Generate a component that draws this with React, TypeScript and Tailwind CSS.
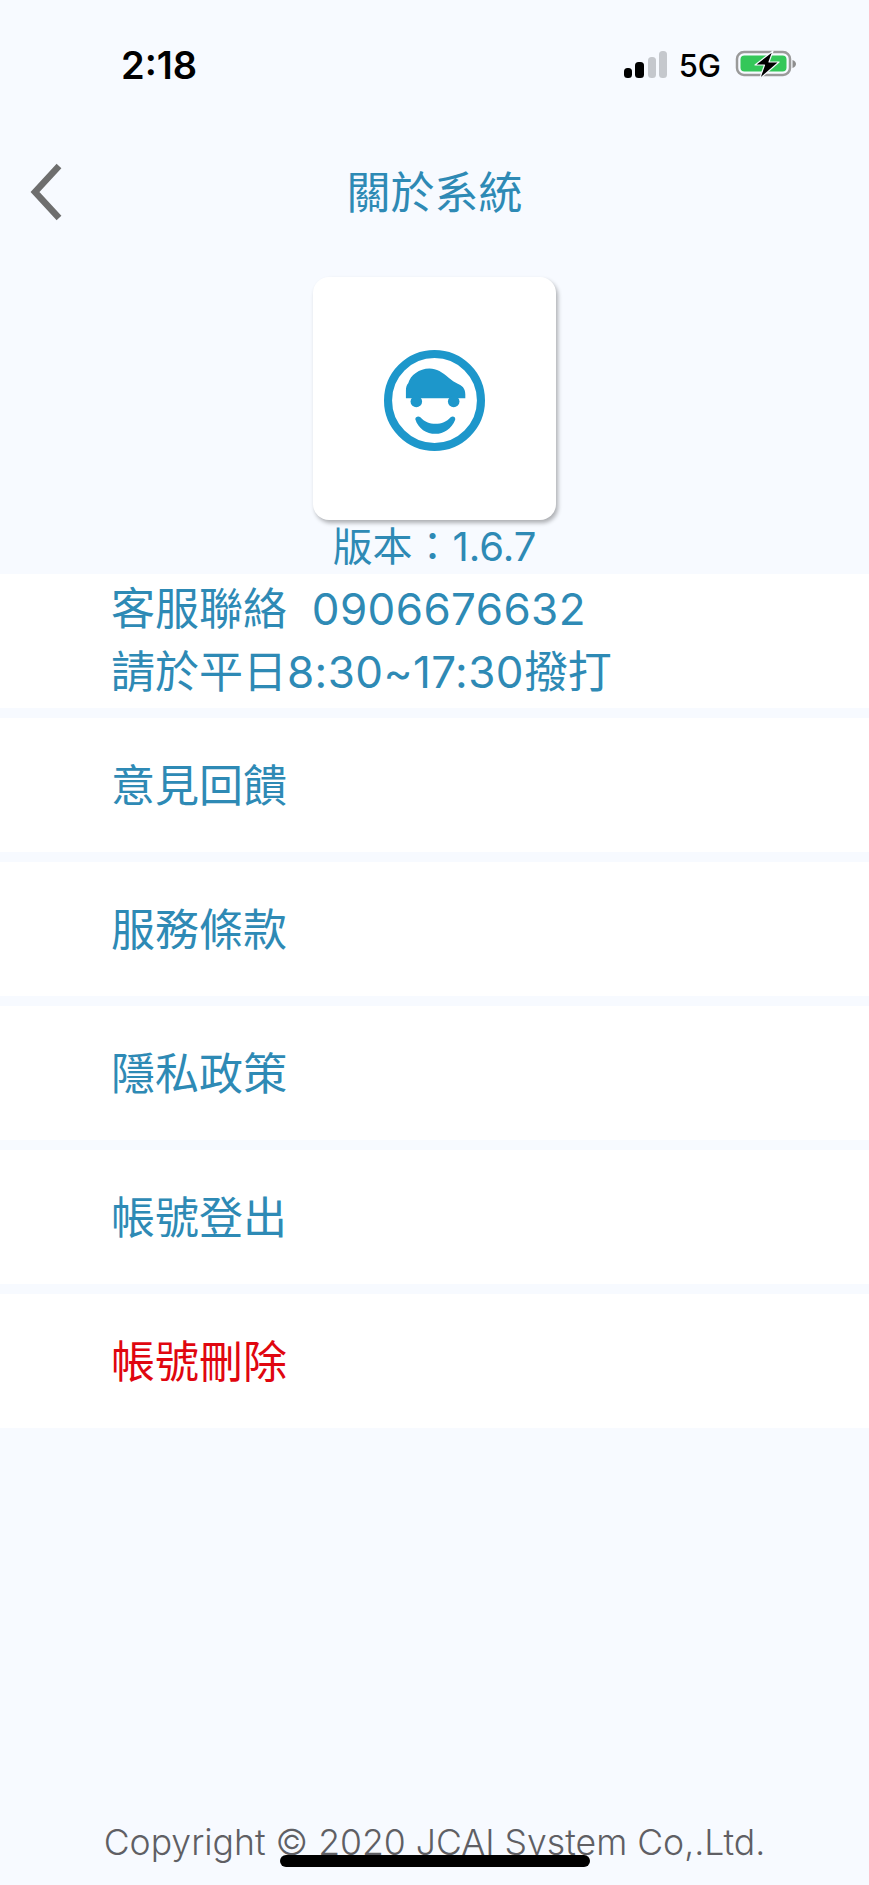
const FONT = "font-['Inter','Noto_Sans_CJK_TC',sans-serif]";

const menuItems = [
  { label: "意見回饋", danger: false },
  { label: "服務條款", danger: false },
  { label: "隱私政策", danger: false },
  { label: "帳號登出", danger: false },
  { label: "帳號刪除", danger: true },
];

function SignalIcon() {
  return (
    <svg width="44" height="28" viewBox="0 0 44 28">
      <rect x="0" y="17" width="8" height="10" rx="3.5" fill="#000" />
      <rect x="11" y="11" width="9" height="16" rx="3.5" fill="#000" />
      <rect x="24" y="6" width="8" height="21" rx="3.5" fill="#c5c8cd" />
      <rect x="35" y="0" width="8" height="27" rx="3.5" fill="#c5c8cd" />
    </svg>
  );
}

function BatteryIcon() {
  return (
    <svg width="62" height="30" viewBox="0 0 62 30">
      <rect x="2" y="2" width="53" height="23" rx="7" fill="none" stroke="#9a9a9a" strokeWidth="2.5" />
      <rect x="5.500" y="5.500" width="46" height="16" rx="4" fill="#34c759" />
      <path d="M57.500 10c2.500 1 3.500 2.500 3.500 4s-1 3-3.500 4z" fill="#8e8e8e" />
      <path d="M38 1 L20 15 H29.500 L24.500 29 L44 12 H34 Z" fill="#000" stroke="#f7faff" strokeWidth="1.200" strokeLinejoin="round" />
    </svg>
  );
}

function Logo() {
  return (
    <svg width="101" height="101" viewBox="0 0 100 100" fill="#1d97cb">
      <circle cx="50" cy="50" r="46" fill="none" stroke="#1d97cb" strokeWidth="8" />
      <path d="M21.700 47.700 V40 C21.700 37 22.500 34.500 24 33 C26 25 35 18.300 45 18.300 C52 18.300 58 22 64 27.500 C67 30 70 32 73 33.500 C77 35 80.500 38 80.500 44 V47.700 Z" />
      <circle cx="32" cy="51" r="5.700" />
      <circle cx="69" cy="51" r="5.700" />
      <path d="M31 68.500 C31 66 34 65 36 66.500 C40 71 45 73 51 73 C57 73 62 71 66 66.500 C68 65 71 66 70.500 69 C67 78 59 83 51 83 C42 83 34 78 31 68.500 Z" />
    </svg>
  );
}

export default function App() {
  return (
    <div className={`relative flex h-[1885px] w-full flex-col overflow-hidden bg-[#f7faff] ${FONT}`}>
      {/* status bar */}
      <div className="flex h-[130px] items-center justify-between pl-[121px] pr-[72px]">
        <span className="text-[38px] font-semibold leading-none text-black">2:18</span>
        <div className="flex items-center">
          <SignalIcon />
          <span className="ml-[11px] text-[31px] font-medium leading-none text-black">5G</span>
          <div className="ml-[14px]">
            <BatteryIcon />
          </div>
        </div>
      </div>

      {/* header */}
      <div className="relative flex h-[125px] items-center justify-center">
        <svg className="absolute left-[29px] top-[33px]" width="34" height="58" viewBox="0 0 34 58" fill="none">
          <path d="M30 3 L6 29 L30 55" stroke="#6e6e6e" strokeWidth="6.500" />
        </svg>
        <span className="text-[44px] leading-none text-[#2e8ab5]">關於系統</span>
      </div>

      {/* logo card */}
      <div className="flex flex-col items-center">
        <div className="mt-[22px] flex h-[243px] w-[243px] items-center justify-center rounded-[16px] bg-white pt-[3px] shadow-[2px_3px_4px_rgba(0,0,0,0.3)]">
          <Logo />
        </div>
        <div className="flex h-[54px] items-center text-[40px] leading-none text-[#2e8ab5]">版本：1.6.7</div>
      </div>

      {/* contact */}
      <div className="flex h-[134px] flex-col justify-center bg-white pl-[111px] text-[44px] leading-[63px] text-[#2e8ab5]">
        <div className="whitespace-pre">
          客服聯絡  <span className="tracking-[0.4px]">0906676632</span>
        </div>
        <div className="whitespace-pre">
          請於平日<span className="tracking-[0.4px]">8:30~17:30</span>撥打
        </div>
      </div>

      {/* menu */}
      <div className="mt-[10px] flex flex-col gap-[10px]">
        {menuItems.map((item) => (
          <div
            key={item.label}
            className={`flex h-[134px] items-center bg-white pl-[111px] pt-[1px] text-[44px] leading-none ${
              item.danger ? "text-[#e0060f]" : "text-[#2e8ab5]"
            }`}
          >
            {item.label}
          </div>
        ))}
      </div>

      {/* footer */}
      <div className="mt-auto flex h-[60px] justify-center text-[35.6px] font-light leading-none text-[#5f5f64]">
        Copyright © 2020 JCAI System Co,.Ltd.
      </div>

      {/* home indicator */}
      <div className="absolute bottom-[18px] left-[280px] h-[12px] w-[310px] rounded-full bg-black" />
    </div>
  );
}
